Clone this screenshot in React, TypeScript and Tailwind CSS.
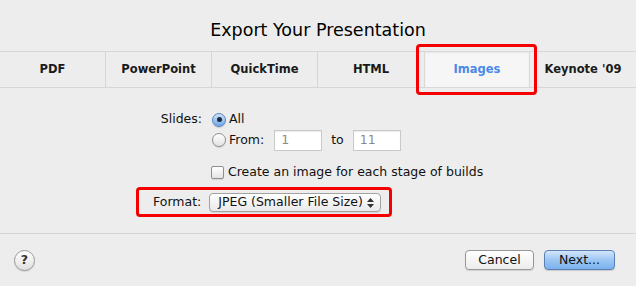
const tabs = ["PDF", "PowerPoint", "QuickTime", "HTML", "Images", "Keynote '09"];

const font = { fontFamily: '"DejaVu Sans", "Liberation Sans", Arial, sans-serif' };

function Radio({ checked }: { checked?: boolean }) {
  return checked ? (
    <span className="flex h-[14px] w-[14px] items-center justify-center rounded-full border border-[#5d83bd] bg-gradient-to-b from-[#cfe2f8] to-[#6ea6e8] shadow-[0_1px_1px_rgba(0,0,0,0.15)]">
      <span className="h-[5px] w-[5px] rounded-full bg-[#1c2a3a]" />
    </span>
  ) : (
    <span className="block h-[14px] w-[14px] rounded-full border border-[#8f8f8f] bg-gradient-to-b from-[#ffffff] to-[#e2e2e2] shadow-[0_1px_1px_rgba(0,0,0,0.12)]" />
  );
}

function NumberField({ value }: { value: string }) {
  return (
    <div className="flex h-[21px] w-[48px] shrink-0 items-center border border-[#c9c9c9] bg-white pl-[6px] text-[#8a8a8a] shadow-[inset_0_1px_1px_rgba(0,0,0,0.08)]">
      {value}
    </div>
  );
}

export default function App() {
  return (
    <div
      className="flex h-[286px] w-[636px] flex-col bg-[#ededed] text-[12.5px] text-[#111]"
      style={font}
    >
      {/* title */}
      <div className="h-[51px] pt-[19px] text-center text-[17.5px] leading-[22px] text-black">
        Export Your Presentation
      </div>

      {/* tab bar */}
      <div className="flex h-[37px] border-y border-[#d6d6d6] text-[11.5px]">
        {tabs.map((t, i) =>
          t === "Images" ? (
            <div key={t} className="relative -my-px w-[106px]">
              <div className="flex h-full items-center justify-center border border-[#d9d9d9] bg-[#f6f6f6] font-bold text-[#4a8ae8] shadow-[inset_0_1px_2px_rgba(0,0,0,0.06)]">
                {t}
              </div>
              <div className="absolute -top-[7px] -bottom-[7px] -left-[8px] -right-[7px] rounded-[4px] border-[3px] border-[#f40000]" />
            </div>
          ) : (
            <div
              key={t}
              className={`flex items-center justify-center font-bold text-[#1a1a1a] ${
                i < 3 ? "w-[106px] border-r border-[#d6d6d6]" : i === 3 ? "w-[106px]" : "flex-1"
              }`}
            >
              {t}
            </div>
          )
        )}
      </div>

      {/* options */}
      <div className="flex flex-col pt-[22px]">
        <div className="flex h-[19px] items-center">
          <span className="w-[202px] text-right">Slides:</span>
          <span className="ml-[10px]">
            <Radio checked />
          </span>
          <span className="ml-[3px]">All</span>
        </div>
        <div className="flex h-[22px] items-center">
          <span className="ml-[212px]">
            <Radio />
          </span>
          <span className="ml-[3px]">From:</span>
          <span className="ml-[10px]">
            <NumberField value="1" />
          </span>
          <span className="ml-[9px]">to</span>
          <span className="ml-[9px]">
            <NumberField value="11" />
          </span>
        </div>
        <div className="mt-[12px] flex h-[18px] items-center">
          <span className="ml-[211px] block h-[13px] w-[13px] rounded-[2px] border border-[#8f8f8f] bg-gradient-to-b from-[#ffffff] to-[#e4e4e4] shadow-[0_1px_1px_rgba(0,0,0,0.1)]" />
          <span className="ml-[4px]">Create an image for each stage of builds</span>
        </div>

        <div className="ml-[136px] mt-[6px] flex w-[256px] items-center rounded-[4px] border-[3px] border-[#f40000] pb-[2px] pl-[14px] pt-[3px]">
          <span>Format:</span>
          <div className="ml-[8px] flex h-[19px] w-[172px] items-center justify-between rounded-[4px] border border-[#a3a3a3] bg-gradient-to-b from-[#ffffff] to-[#e9e9e9] pl-[8px] pr-[6px] shadow-[0_1px_1px_rgba(0,0,0,0.1)]">
            <span>JPEG (Smaller File Size)</span>
            <span className="flex flex-col items-center gap-[2px]">
              <svg width="7" height="4" viewBox="0 0 7 4">
                <path d="M0 4 L3.5 0 L7 4 Z" fill="#333" />
              </svg>
              <svg width="7" height="4" viewBox="0 0 7 4">
                <path d="M0 0 L7 0 L3.5 4 Z" fill="#333" />
              </svg>
            </span>
          </div>
        </div>
      </div>

      {/* footer */}
      <div className="mt-[16px] flex flex-1 items-start justify-between border-t border-[#d6d6d6] px-[14px] pt-[16px]">
        <div className="flex h-[21px] w-[21px] items-center justify-center rounded-full border border-[#9a9a9a] bg-gradient-to-b from-[#ffffff] to-[#e0e0e0] font-bold text-[#333] shadow-[0_1px_1px_rgba(0,0,0,0.12)]">
          ?
        </div>
        <div className="flex gap-[10px] pr-[7px]">
          <button className="flex h-[20px] w-[69px] items-center justify-center rounded-[4px] border border-[#979797] bg-gradient-to-b from-[#ffffff] to-[#ececec] text-[#111] shadow-[0_1px_1px_rgba(0,0,0,0.12)]">
            Cancel
          </button>
          <button className="flex h-[20px] w-[71px] items-center justify-center rounded-[4px] border border-[#5b7fb5] bg-gradient-to-b from-[#d3e6fb] via-[#9cc6f3] to-[#79b2ee] text-[#111] shadow-[0_1px_1px_rgba(0,0,0,0.15)]">
            Next...
          </button>
        </div>
      </div>
    </div>
  );
}
